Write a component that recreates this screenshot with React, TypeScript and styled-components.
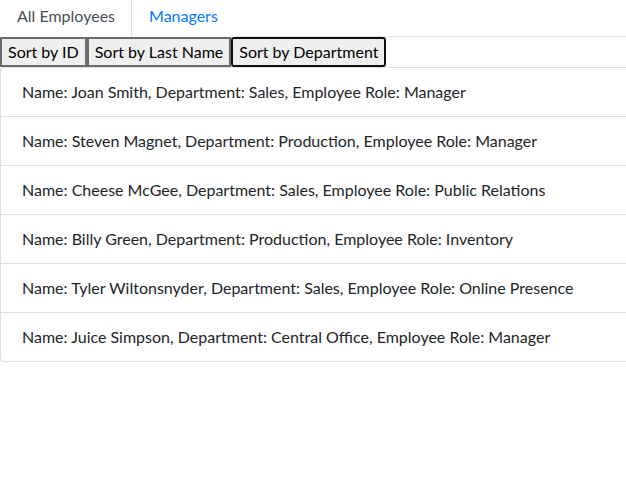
import styled, { createGlobalStyle } from "styled-components"

const GlobalStyle = createGlobalStyle`
  body {
    margin: 0;
    font-family: Lato, "Open Sans", sans-serif;
    font-size: 16px;
    line-height: 1.5;
    color: #212529;
    background: #fff;
  }
`

const employees = [
  { name: "Joan Smith", department: "Sales", role: "Manager" },
  { name: "Steven Magnet", department: "Production", role: "Manager" },
  { name: "Cheese McGee", department: "Sales", role: "Public Relations" },
  { name: "Billy Green", department: "Production", role: "Inventory" },
  { name: "Tyler Wiltonsnyder", department: "Sales", role: "Online Presence" },
  { name: "Juice Simpson", department: "Central Office", role: "Manager" },
]

export default function App() {
  return (
    <>
      <GlobalStyle />
      <Tabs>
        <Tab active>All Employees</Tab>
        <Tab>Managers</Tab>
      </Tabs>
      <SortBar>
        <SortButton>Sort by ID</SortButton>
        <SortButton>Sort by Last Name</SortButton>
        <SortButton focused>Sort by Department</SortButton>
      </SortBar>
      <List>
        {employees.map((e) => (
          <Item key={e.name}>
            Name: {e.name}, Department: {e.department}, Employee Role: {e.role}
          </Item>
        ))}
      </List>
    </>
  )
}

const Tabs = styled.div`
  display: flex;
  border-bottom: 1px solid #dee2e6;
`

const Tab = styled.a<{ active?: boolean }>`
  display: block;
  padding: 4px 16px 8px 17px;
  margin-bottom: -1px;
  cursor: pointer;
  white-space: nowrap;
  color: ${(p) => (p.active ? "#495057" : "#007bff")};
  background: #fff;
  border-right: 1px solid ${(p) => (p.active ? "#dee2e6" : "transparent")};
  border-bottom: 1px solid ${(p) => (p.active ? "#fff" : "transparent")};
`

const SortBar = styled.div`
  display: flex;
`

const SortButton = styled.button<{ focused?: boolean }>`
  font-family: inherit;
  font-size: 16px;
  line-height: 24px;
  padding: 1px 6px;
  margin: 0;
  white-space: nowrap;
  color: #000;
  background: #efefef;
  border: 2px solid ${(p) => (p.focused ? "#101010" : "#6b6b6b")};
  border-radius: ${(p) => (p.focused ? "3px" : "0")};
`

const List = styled.ul`
  list-style: none;
  margin: 0;
  padding: 0;
  display: flex;
  flex-direction: column;
`

const Item = styled.li`
  padding: 12px 20px 12px 21px;
  white-space: nowrap;
  background: #fff;
  border: 1px solid #dfdfdf;
  border-right: none;
  margin-top: -1px;

  &:first-child {
    margin-top: 0;
    border-top-left-radius: 4px;
  }

  &:last-child {
    border-bottom-left-radius: 4px;
  }
`
